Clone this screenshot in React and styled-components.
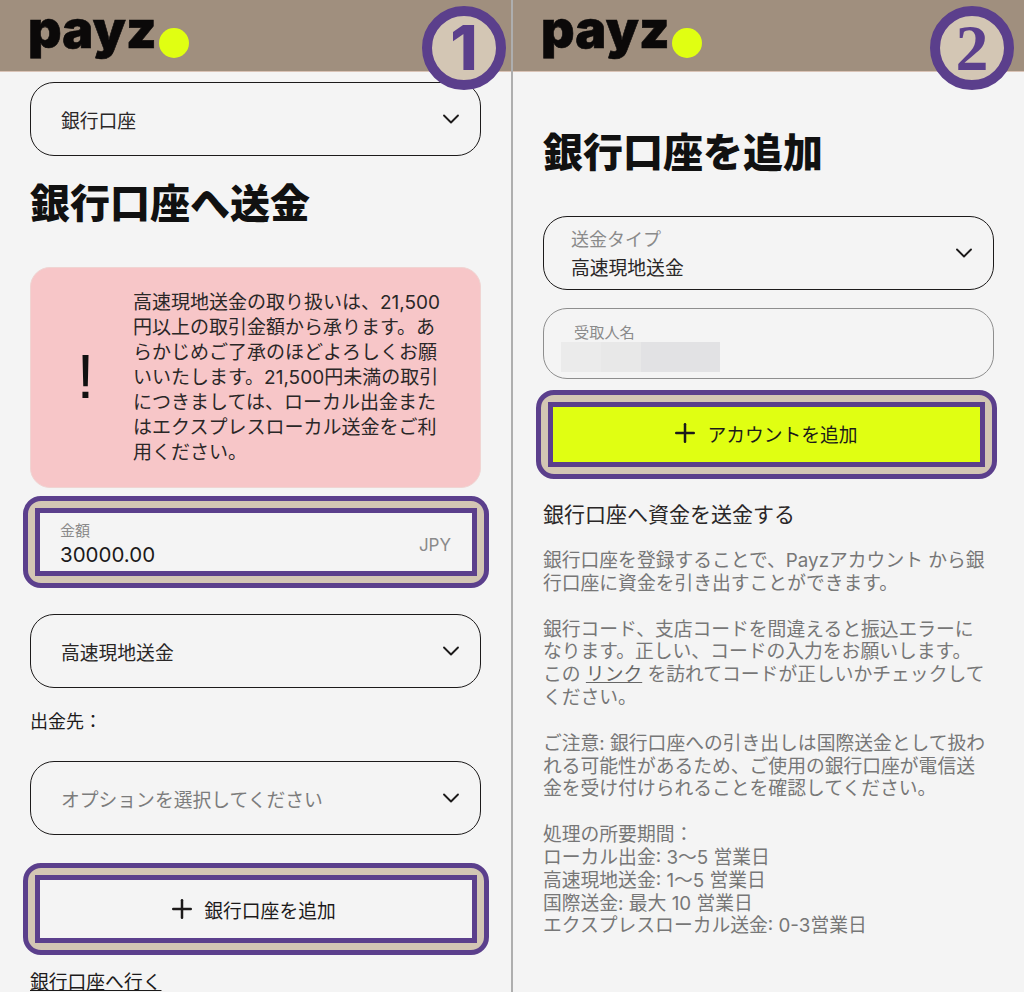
import React from "react";
import styled, { createGlobalStyle } from "styled-components";
import { ChevronDown, Plus } from "lucide-react";

const purple = "#5b3f8c";
const tan = "#d3c6b4";
const fontStack = `Inter, "Noto Sans CJK JP", sans-serif`;

const GlobalStyle = createGlobalStyle`
  html, body {
    margin: 0;
    padding: 0;
    background: #f4f4f4;
    font-family: ${fontStack};
    color: #1c1a1a;
  }
`;

const Page = styled.div`
  width: 1024px;
  height: 992px;
  display: grid;
  grid-template-columns: 511px 2px 511px;
  overflow: hidden;
`;

const Divider = styled.div`
  background: #aeaeae;
`;

const Panel = styled.section`
  position: relative;
  height: 992px;
  overflow: hidden;
`;

const Header = styled.header`
  height: 72px;
  background: #a08f7e;
  border-bottom: 1px solid #d9c3b6;
  box-sizing: border-box;
  padding-left: 28px;
  display: flex;
  align-items: flex-start;
`;

const Logo = styled.div`
  font-family: Inter, sans-serif;
  font-weight: 900;
  font-size: 52px;
  line-height: 51px;
  letter-spacing: 0.3px;
  -webkit-text-stroke: 0.6px #0b0909;
  color: #0b0909;
  margin-top: 4px;
`;

const LogoDot = styled.span`
  width: 30px;
  height: 30px;
  border-radius: 50%;
  background: #e0ff12;
  margin: 28px 0 0 2px;
`;

const Badge = styled.div`
  position: absolute;
  top: 6px;
  left: ${(p) => p.$left}px;
  width: 84px;
  height: 84px;
  box-sizing: border-box;
  border: 10px solid ${purple};
  border-radius: 50%;
  background: ${tan};
  color: ${purple};
  display: flex;
  align-items: center;
  justify-content: center;
  font-family: ${(p) => p.$serif ? `"Liberation Serif", serif` : `Inter, sans-serif`};
  font-weight: ${(p) => p.$serif ? 700 : 800};
  font-size: ${(p) => p.$serif ? 66 : 62}px;
  line-height: 1;
`;

const Column = styled.div`
  padding: 0 30px;
  display: flex;
  flex-direction: column;
`;

const Select = styled.div`
  height: 74px;
  box-sizing: border-box;
  border: 1.5px solid #1c1a1a;
  border-radius: 24px;
  margin-top: ${(p) => p.$top || 0}px;
  padding: 0 15px 0 ${(p) => p.$stacked ? 27 : 30}px;
  display: flex;
  align-items: center;
  justify-content: space-between;
  font-size: 18.8px;
  color: ${(p) => p.$muted ? "#7c7c7c" : "#2a2727"};
`;

const Stack = styled.div`
  margin-top: 2px;
  display: flex;
  flex-direction: column;
  line-height: 29px;
`;

const SmallLabel = styled.span`
  color: #8a8a8a;
  font-size: 18px;
`;

const Title = styled.h1`
  margin: ${(p) => p.$top}px 0 0;
  font-size: 40px;
  line-height: 52px;
  font-weight: 900;
  color: #111;
`;

const Alert = styled.div`
  margin-top: 37px;
  height: 221px;
  box-sizing: border-box;
  background: #f7c6c8;
  border: 1px solid #f0d4d2;
  border-radius: 20px;
  display: grid;
  grid-template-columns: 102px 1fr;
  align-items: center;
`;

const Bang = styled.span`
  font-family: "Liberation Sans", sans-serif;
  font-size: 63px;
  line-height: 70px;
  text-align: center;
  padding: 0 0 4px 7px;
  color: #111;
`;

const AlertText = styled.p`
  margin: 0;
  padding-right: 36px;
  font-size: 19px;
  line-height: 25px;
  color: #2a2727;
`;

const Highlight = styled.div`
  margin: ${(p) => p.$top}px ${(p) => p.$right}px 0 -7px;
  height: ${(p) => p.$height}px;
  box-sizing: border-box;
  border: 5px solid ${purple};
  border-radius: 18px;
  background: ${tan};
  padding: 7px;
  display: flex;
`;

const HighlightInner = styled.div`
  flex: 1;
  border: 5px solid ${purple};
  background: ${(p) => p.$fill || "#f4f4f4"};
  padding: ${(p) => p.$pad || 0};
  display: flex;
  align-items: center;
  justify-content: ${(p) => p.$between ? "space-between" : "center"};
  gap: 7px;
  font-size: 18.8px;
  color: #1c1a1a;
`;

const AmountLabel = styled.div`
  font-size: 15px;
  line-height: 17px;
  color: #8a8a8a;
`;

const AmountValue = styled.div`
  margin-top: 3px;
  font-size: 20.5px;
  line-height: 25px;
`;

const Currency = styled.span`
  font-size: 17px;
  color: #8a8a8a;
`;

const FieldLabel = styled.div`
  margin-top: 22px;
  font-size: 18px;
  line-height: 24px;
`;

const BankLink = styled.a`
  margin-top: 15px;
  font-size: 18.8px;
  line-height: 26px;
  color: #1c1a1a;
  text-decoration: underline;
`;

const NameInput = styled.div`
  margin-top: 18px;
  height: 71px;
  box-sizing: border-box;
  border: 1.5px solid #8e8e8e;
  border-radius: 24px;
  padding: 15px 0 0 17px;
`;

const NameLabel = styled.div`
  margin-left: 13px;
  font-size: 15.2px;
  line-height: 18px;
  color: #8a8a8a;
`;

const Redaction = styled.div`
  display: flex;
  height: 30px;
  width: 159px;
`;

const RedactionPart = styled.span`
  flex: ${(p) => p.$grow};
  background: ${(p) => p.$shade};
`;

const SectionTitle = styled.h2`
  margin: 22px 0 0;
  font-size: 21px;
  line-height: 28px;
  font-weight: 400;
  color: #2a2727;
`;

const Paragraph = styled.p`
  margin: ${(p) => p.$top}px 0 0;
  padding-right: 6px;
  font-size: 18.8px;
  line-height: 22.8px;
  color: #777;
`;

const InlineLink = styled.a`
  color: #666;
  text-decoration: underline;
`;

const Chevron = () => <ChevronDown size={28} strokeWidth={1.6} color="#1c1a1a" />;

export default function App() {
  return (
    <Page>
      <GlobalStyle />
      <Panel>
        <Header>
          <Logo>payz</Logo>
          <LogoDot />
        </Header>
        <Badge $left={422}>1</Badge>
        <Column>
          <Select $top={10}>
            銀行口座
            <Chevron />
          </Select>
          <Title $top={22}>銀行口座へ送金</Title>
          <Alert>
            <Bang>!</Bang>
            <AlertText>
              高速現地送金の取り扱いは、21,500円以上の取引金額から承ります。あらかじめご了承のほどよろしくお願いいたします。21,500円未満の取引につきましては、ローカル出金またはエクスプレスローカル送金をご利用ください。
            </AlertText>
          </Alert>
          <Highlight $top={8} $right={-8} $height={92}>
            <HighlightInner $between $pad="5px 21px 0 20px">
              <div>
                <AmountLabel>金額</AmountLabel>
                <AmountValue>30000.00</AmountValue>
              </div>
              <Currency>JPY</Currency>
            </HighlightInner>
          </Highlight>
          <Select $top={26}>
            高速現地送金
            <Chevron />
          </Select>
          <FieldLabel>出金先：</FieldLabel>
          <Select $top={27} $muted>
            オプションを選択してください
            <Chevron />
          </Select>
          <Highlight $top={28} $right={-8} $height={92}>
            <HighlightInner $pad="0 9px 0 0">
              <Plus size={30} strokeWidth={2} color="#1c1a1a" />
              銀行口座を追加
            </HighlightInner>
          </Highlight>
          <BankLink>銀行口座へ行く</BankLink>
        </Column>
      </Panel>
      <Divider />
      <Panel>
        <Header>
          <Logo>payz</Logo>
          <LogoDot />
        </Header>
        <Badge $left={417} $serif>2</Badge>
        <Column>
          <Title $top={55}>銀行口座を追加</Title>
          <Select $top={37} $stacked>
            <Stack>
              <SmallLabel>送金タイプ</SmallLabel>
              高速現地送金
            </Stack>
            <Chevron />
          </Select>
          <NameInput>
            <NameLabel>受取人名</NameLabel>
            <Redaction>
              <RedactionPart $grow={1} $shade="#ebebeb" />
              <RedactionPart $grow={1} $shade="#e8e8e8" />
              <RedactionPart $grow={2} $shade="#e2e2e4" />
            </Redaction>
          </NameInput>
          <Highlight $top={11} $right={-3} $height={89}>
            <HighlightInner $fill="#e0ff12" $pad="0 5px 3px 0">
              <Plus size={30} strokeWidth={2} color="#1c1a1a" />
              アカウントを追加
            </HighlightInner>
          </Highlight>
          <SectionTitle>銀行口座へ資金を送金する</SectionTitle>
          <Paragraph $top={21}>
            銀行口座を登録することで、Payzアカウント から銀行口座に資金を引き出すことができます。
          </Paragraph>
          <Paragraph $top={23}>
            銀行コード、支店コードを間違えると振込エラーになります。正しい、コードの入力をお願いします。この <InlineLink>リンク</InlineLink> を訪れてコードが正しいかチェックしてください。
          </Paragraph>
          <Paragraph $top={23}>
            ご注意: 銀行口座への引き出しは国際送金として扱われる可能性があるため、ご使用の銀行口座が電信送金を受け付けられることを確認してください。
          </Paragraph>
          <Paragraph $top={23}>
            処理の所要期間：<br />
            ローカル出金: 3〜5 営業日<br />
            高速現地送金: 1〜5 営業日<br />
            国際送金: 最大 10 営業日<br />
            エクスプレスローカル送金: 0-3営業日
          </Paragraph>
        </Column>
      </Panel>
    </Page>
  );
}
